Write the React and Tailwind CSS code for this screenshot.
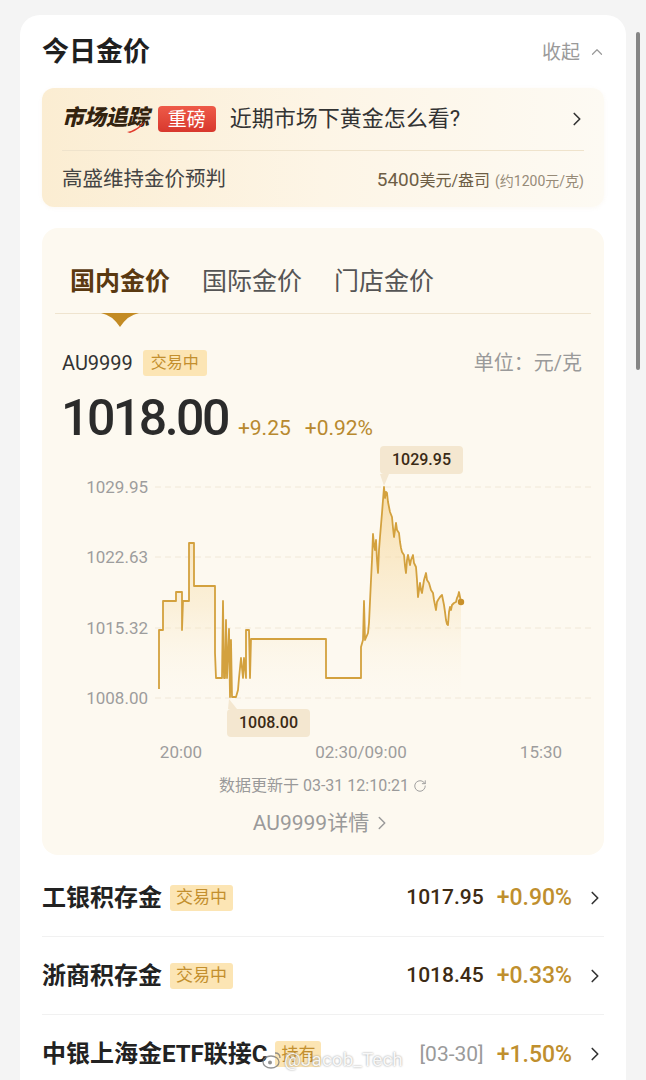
import React from 'react';
import { ChevronRight, ChevronUp, RotateCw } from 'lucide-react';

const LINE =
  'M159,689 L159,630 L163,630 L163,601 L176,601 L176,592 L182,592 L182,630 L183,601 L189,601 L189,543 L194,543 L194,586 L215,586 L215,653 L216,678 L222,678 L223,601 L224,678 L225,678 L226,620 L227,678 L229,629 L230,697 L231,640 L232,697 L236,697 L238,690 L239,678 L241,658 L243,678 L244,658 L246,678 L246,630 L249,630 L250,678 L251,639 L252,639 L326,639 L326,678 L361,678 L361,647 L363,640 L364,601 L365,640 L368,633 L369,623 L371,580 L372,560 L373,534 L374,545 L375,550 L376,540 L377,560 L378,573 L379,550 L380,537 L381,525 L382,513 L383,500 L384,487 L385,498 L386,492 L387,493 L388,502 L389,507 L390,512 L392,517 L393,528 L394,537 L396,523 L397,530 L399,533 L400,542 L401,548 L402,552 L404,555 L405,566 L406,573 L407,560 L408,555 L410,565 L411,560 L413,555 L414,563 L416,567 L417,580 L418,597 L420,583 L421,590 L422,593 L424,580 L426,573 L427,580 L429,583 L431,590 L433,593 L434,600 L436,610 L437,602 L438,600 L440,597 L442,595 L443,600 L444,605 L445,612 L446,620 L447,624 L448,625 L449,612 L450,607 L451,610 L452,605 L454,603 L456,602 L457,598 L458,596 L459,592 L460,597 L461,602';

function Logo() {
  return (
    <span className="relative inline-block">
      <span className="text-[22px] font-black italic leading-none tracking-[-0.3px] text-[#33230f]">市场追踪</span>
      <svg className="absolute left-[64px] top-[13px]" width="24" height="13" viewBox="0 0 24 13">
        <path d="M1,12 Q11,10 19,1 Q15,9 4,13 Z" fill="#e23a2c" />
      </svg>
    </span>
  );
}

function Badge({ children, className = '' }) {
  return (
    <span
      className={`flex items-center justify-center rounded-[3px] bg-[#fce5b4] text-[#c38f2e] leading-none ${className}`}
    >
      {children}
    </span>
  );
}

function Row({ name, badge, price, priceGray, change, border }) {
  return (
    <div className={`flex h-[78px] items-center ${border ? 'border-b border-[#f1f1f1]' : ''}`}>
      <span className="text-[24px] font-bold leading-none text-[#222]">{name}</span>
      <Badge className="ml-[8px] h-[26px] px-[6px] text-[17px]">{badge}</Badge>
      <div className="ml-auto flex items-center">
        <span
          className={`text-[21px] leading-none ${priceGray ? 'font-normal text-[#9a9a9a]' : 'font-medium text-[#3d2b14]'}`}
        >
          {price}
        </span>
        <span className="ml-[13px] text-[23px] font-medium leading-none text-[#bf8f2e]">{change}</span>
        <ChevronRight className="ml-[12px] -mr-[2px] text-[#333]" size={22} strokeWidth={1.8} />
      </div>
    </div>
  );
}

export default function App() {
  return (
    <div className="relative h-[1080px] overflow-hidden bg-[#f4f4f4] font-[Roboto,'Noto_Sans_CJK_SC',sans-serif]">
      <div className="mx-[20px] mt-[15px] rounded-[20px] bg-white px-[22px] pt-[22px] pb-[20px]">
        {/* Header */}
        <div className="flex h-[30px] items-center justify-between">
          <div className="text-[27px] font-bold leading-none text-[#1f1f1f]">今日金价</div>
          <div className="flex items-center gap-[8px] text-[19px] leading-none text-[#9a9a9a]">
            收起
            <ChevronUp size={18} strokeWidth={1.6} className="-mr-[2px]" />
          </div>
        </div>

        {/* Banner */}
        <div className="mt-[21px] rounded-[12px] bg-linear-to-r from-[#fbedd2] via-[#fdf5e6] to-[#fdfaf3] px-[20px] shadow-[0_1px_4px_rgba(200,170,120,0.08)]">
          <div className="flex h-[62px] items-center">
            <Logo />
            <span className="ml-[9px] flex h-[26px] w-[58px] items-center justify-center rounded-[4px] bg-linear-to-b from-[#ee5a48] to-[#d8372d] text-[19px] leading-none text-white">
              重磅
            </span>
            <span className="ml-[14px] text-[22px] leading-none text-[#333]">近期市场下黄金怎么看?</span>
            <ChevronRight className="ml-auto -mr-[4px] text-[#333]" size={22} strokeWidth={1.8} />
          </div>
          <div className="h-px bg-[#efe3cc]" />
          <div className="flex h-[56px] items-center justify-between">
            <span className="text-[20.5px] leading-none text-[#444]">高盛维持金价预判</span>
            <span className="flex items-baseline leading-none text-[#6e5e45]">
              <span className="text-[19px]">5400</span>
              <span className="text-[16px]">美元/盎司</span>
              <span className="ml-[5px] text-[14px] text-[#978b78]">(约1200元/克)</span>
            </span>
          </div>
        </div>

        {/* Chart panel */}
        <div className="mt-[21px] rounded-[16px] bg-[#fdf9f0] pb-[18px]">
          <div className="px-[13px]">
            <div className="flex gap-[32px] pl-[15px] pt-[36px] pb-[13px] text-[25px] leading-[36px]">
              <span className="relative font-bold text-[#5a3911]">
                国内金价
                <svg
                  className="absolute left-1/2 top-[49px] -translate-x-1/2"
                  width="38"
                  height="14"
                  viewBox="0 0 38 14"
                >
                  <path d="M0,0 L38,0 Q27,2 19,14 Q11,2 0,0 Z" fill="#c38b24" />
                </svg>
              </span>
              <span className="text-[#555]">国际金价</span>
              <span className="text-[#555]">门店金价</span>
            </div>
            <div className="h-px bg-[#efe4cf]" />
          </div>

          <div className="mt-[36px] flex h-[26px] items-center justify-between pl-[20px] pr-[22px]">
            <div className="flex items-center gap-[10px]">
              <span className="text-[20px] leading-none text-[#333]">AU9999</span>
              <Badge className="h-[26px] w-[64px] text-[16px]">交易中</Badge>
            </div>
            <span className="text-[20px] leading-none text-[#9a9a9a]">单位：元/克</span>
          </div>

          <div className="mt-[17px] flex h-[50px] items-baseline pl-[19px]">
            <span className="text-[50px] font-medium leading-[50px] tracking-[-2.5px] text-[#2b2b2b]">1018.00</span>
            <span className="ml-[10px] text-[21px] leading-none text-[#b8892f]">+9.25</span>
            <span className="ml-[14px] text-[21px] leading-none text-[#b8892f]">+0.92%</span>
          </div>

          {/* Chart */}
          <div className="relative h-[327px]">
            <svg className="absolute inset-0" width="562" height="327" viewBox="42 443 562 327">
              <defs>
                <linearGradient id="area" gradientUnits="userSpaceOnUse" x1="0" y1="487" x2="0" y2="705">
                  <stop offset="0" stopColor="#f5cf86" stopOpacity="0.65" />
                  <stop offset="0.55" stopColor="#f8e2b6" stopOpacity="0.4" />
                  <stop offset="1" stopColor="#fdf9f0" stopOpacity="0" />
                </linearGradient>
              </defs>
              {[487, 557, 628, 698].map((y) => (
                <line key={y} x1="155" x2="592" y1={y} y2={y} stroke="#f1e8d8" strokeWidth="1" strokeDasharray="6 4" />
              ))}
              <path d={LINE + ' L461,705 L159,705 Z'} fill="url(#area)" />
              <path d={LINE} fill="none" stroke="#d3a13e" strokeWidth="1.8" strokeLinejoin="round" />
              <circle cx="461" cy="602" r="3.2" fill="#c8902a" />
              <polygon points="380,474 389,474 384,486" fill="#f4e7d0" />
              <polygon points="228,709 237,709 229,699" fill="#f4e7d0" />
            </svg>

            {[
              ['1029.95', 34],
              ['1022.63', 104],
              ['1015.32', 175],
              ['1008.00', 245],
            ].map(([t, top]) => (
              <span
                key={t}
                className="absolute left-[36px] w-[70px] text-right text-[17px] leading-[20px] text-[#9d9d9d]"
                style={{ top }}
              >
                {t}
              </span>
            ))}

            <span className="absolute left-[338px] top-[3px] flex h-[28px] w-[83px] items-center justify-center rounded-[4px] bg-[#f4e7d0] text-[16px] font-medium leading-none text-[#3a2a15]">
              1029.95
            </span>
            <span className="absolute left-[185px] top-[266px] flex h-[28px] w-[83px] items-center justify-center rounded-[4px] bg-[#f4e7d0] text-[16px] font-medium leading-none text-[#3a2a15]">
              1008.00
            </span>

            <span className="absolute left-[139px] top-[299px] -translate-x-1/2 text-[17px] leading-[20px] text-[#9d9d9d]">
              20:00
            </span>
            <span className="absolute left-[319px] top-[299px] -translate-x-1/2 text-[17px] leading-[20px] text-[#9d9d9d]">
              02:30/09:00
            </span>
            <span className="absolute left-[499px] top-[299px] -translate-x-1/2 text-[17px] leading-[20px] text-[#9d9d9d]">
              15:30
            </span>
          </div>

          <div className="mt-[6px] flex h-[20px] items-center justify-center gap-[4px] text-[16px] leading-[20px] text-[#9a9a9a]">
            数据更新于 03-31 12:10:21
            <RotateCw size={14} strokeWidth={1.6} />
          </div>
          <div className="mt-[13px] flex h-[28px] items-center justify-center text-[21px] leading-[28px] text-[#9a9a9a]">
            AU9999详情
            <ChevronRight size={22} strokeWidth={1.6} className="ml-[2px]" />
          </div>
        </div>

        {/* List */}
        <div className="mt-[4px]">
          <Row name="工银积存金" badge="交易中" price="1017.95" change="+0.90%" border />
          <Row name="浙商积存金" badge="交易中" price="1018.45" change="+0.33%" border />
          <Row name="中银上海金ETF联接C" badge="持有" price="[03-30]" priceGray change="+1.50%" />
        </div>
      </div>

      {/* watermark */}
      <div className="absolute left-[262px] top-[1050px] flex items-center gap-[2px] text-[19px] leading-none text-white/90 [text-shadow:0_0_2px_rgba(0,0,0,0.45)]">
        <svg width="20" height="18" viewBox="0 0 20 18">
          <ellipse cx="9" cy="11" rx="8" ry="6" fill="none" stroke="rgba(120,120,120,0.8)" strokeWidth="1.3" />
          <circle cx="8" cy="11.5" r="2" fill="rgba(120,120,120,0.8)" />
          <path d="M13,2 Q18,2 18,7" fill="none" stroke="rgba(120,120,120,0.8)" strokeWidth="1.3" />
        </svg>
        <span>@Jacob_Tech</span>
      </div>

      {/* scrollbar */}
      <div className="absolute left-[636px] top-[32px] h-[338px] w-[4px] rounded-full bg-[#858585]" />
    </div>
  );
}
